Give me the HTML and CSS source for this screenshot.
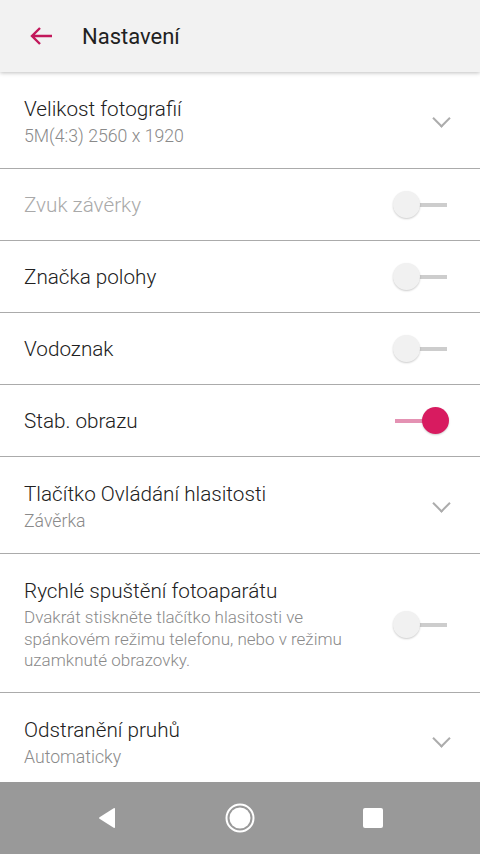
FILE: index.html
```html
<!DOCTYPE html>
<html lang="cs">
<head>
    <meta charset="UTF-8">
    <meta name="viewport" content="width=device-width, initial-scale=1.0">
    <title>Nastavení</title>
    <link rel="stylesheet" href="styles.css">
</head>
<body>
    <div id="app">
        <header class="toolbar">
            <svg class="back" width="24" height="20" viewBox="0 0 24 20">
                <path d="M23 10H3 M11 2 L3 10 L11 18" fill="none" stroke="#c2185b" stroke-width="2.4"/>
            </svg>
            <h1 class="toolbar-title">Nastavení</h1>
        </header>

        <div class="settings">
            <div class="row">
                <div class="text">
                    <div class="title">Velikost fotografií</div>
                    <div class="summary">5M(4:3) 2560 x 1920</div>
                </div>
                <span class="chevron"></span>
            </div>
            <div class="row single disabled">
                <div class="text">
                    <div class="title">Zvuk závěrky</div>
                </div>
                <span class="switch"><span class="track"></span><span class="thumb"></span></span>
            </div>
            <div class="row single">
                <div class="text">
                    <div class="title">Značka polohy</div>
                </div>
                <span class="switch"><span class="track"></span><span class="thumb"></span></span>
            </div>
            <div class="row single">
                <div class="text">
                    <div class="title">Vodoznak</div>
                </div>
                <span class="switch"><span class="track"></span><span class="thumb"></span></span>
            </div>
            <div class="row single">
                <div class="text">
                    <div class="title">Stab. obrazu</div>
                </div>
                <span class="switch on"><span class="track"></span><span class="thumb"></span></span>
            </div>
            <div class="row">
                <div class="text">
                    <div class="title">Tlačítko Ovládání hlasitosti</div>
                    <div class="summary">Závěrka</div>
                </div>
                <span class="chevron"></span>
            </div>
            <div class="row">
                <div class="text">
                    <div class="title">Rychlé spuštění fotoaparátu</div>
                    <div class="summary long">Dvakrát stiskněte tlačítko hlasitosti ve spánkovém režimu telefonu, nebo v režimu uzamknuté obrazovky.</div>
                </div>
                <span class="switch"><span class="track"></span><span class="thumb"></span></span>
            </div>
            <div class="row">
                <div class="text">
                    <div class="title">Odstranění pruhů</div>
                    <div class="summary">Automaticky</div>
                </div>
                <span class="chevron"></span>
            </div>
        </div>

        <nav class="navbar">
            <svg width="20" height="22" viewBox="0 0 20 22">
                <path d="M18 2 L18 20 Q18 21.5 16.7 20.8 L2.5 11.8 Q1.5 11 2.5 10.2 L16.7 1.2 Q18 0.5 18 2 Z" fill="#fff"/>
            </svg>
            <svg width="30" height="30" viewBox="0 0 30 30">
                <circle cx="15" cy="15" r="13.5" fill="none" stroke="#fff" stroke-width="2"/>
                <circle cx="15" cy="15" r="10.5" fill="#fff"/>
            </svg>
            <span class="square"></span>
        </nav>
    </div>
</body>
</html>
```

FILE: styles.css
```css
body {
    margin: 0;
    padding: 0;
    font-family: Roboto, "Noto Sans", sans-serif;
    font-weight: 300;
    background: #fff;
}

#app {
    width: 480px;
    height: 854px;
    display: flex;
    flex-direction: column;
    overflow: hidden;
}

.toolbar {
    height: 72px;
    flex-shrink: 0;
    display: flex;
    align-items: center;
    background: #f2f2f2;
    box-shadow: 0 1px 4px rgba(0, 0, 0, 0.25);
    position: relative;
    z-index: 1;
}

.back {
    margin-left: 29px;
    margin-right: 29px;
}

.toolbar-title {
    margin: 0;
    font-size: 22px;
    font-weight: 400;
    color: #212121;
}

.settings {
    flex: 1;
    overflow: hidden;
}

.row {
    display: flex;
    align-items: center;
    padding: 24px 24px 20px 24px;
    border-bottom: 1px solid #ababab;
}

.row.single {
    padding: 0 24px;
    height: 71px;
}

.text {
    flex: 1;
}

.title {
    font-size: 20.7px;
    line-height: 26px;
    color: #212121;
}

.summary {
    font-size: 17.7px;
    line-height: 24px;
    margin-top: 2px;
    color: #8a8a8a;
}

.summary.long {
    font-size: 17px;
    line-height: 21.5px;
    margin-top: 3px;
    padding-right: 12px;
}

.disabled .title {
    color: #a9a9a9;
}

.chevron {
    width: 11px;
    height: 11px;
    border-right: 2px solid #acacac;
    border-bottom: 2px solid #acacac;
    transform: rotate(45deg);
    margin-right: 8px;
    margin-top: -8px;
}

.switch {
    position: relative;
    width: 56px;
    height: 28px;
    margin-right: 7px;
    flex-shrink: 0;
}

.track {
    position: absolute;
    left: 2px;
    right: 2px;
    top: 12px;
    height: 4px;
    background: #cdcdcd;
}

.thumb {
    position: absolute;
    left: 0;
    top: 0;
    width: 27px;
    height: 27px;
    border-radius: 50%;
    background: #f1f1f1;
    box-shadow: 0 1px 2px rgba(0, 0, 0, 0.2);
}

.switch.on .track {
    background: #e492b3;
}

.switch.on .thumb {
    left: auto;
    right: 0;
    background: #d81b60;
}

.navbar {
    height: 72px;
    flex-shrink: 0;
    background: #999999;
    display: flex;
    align-items: center;
    justify-content: space-between;
    padding: 0 97px 0 97px;
}

.square {
    width: 20px;
    height: 20px;
    border-radius: 2px;
    background: #fff;
}
```
